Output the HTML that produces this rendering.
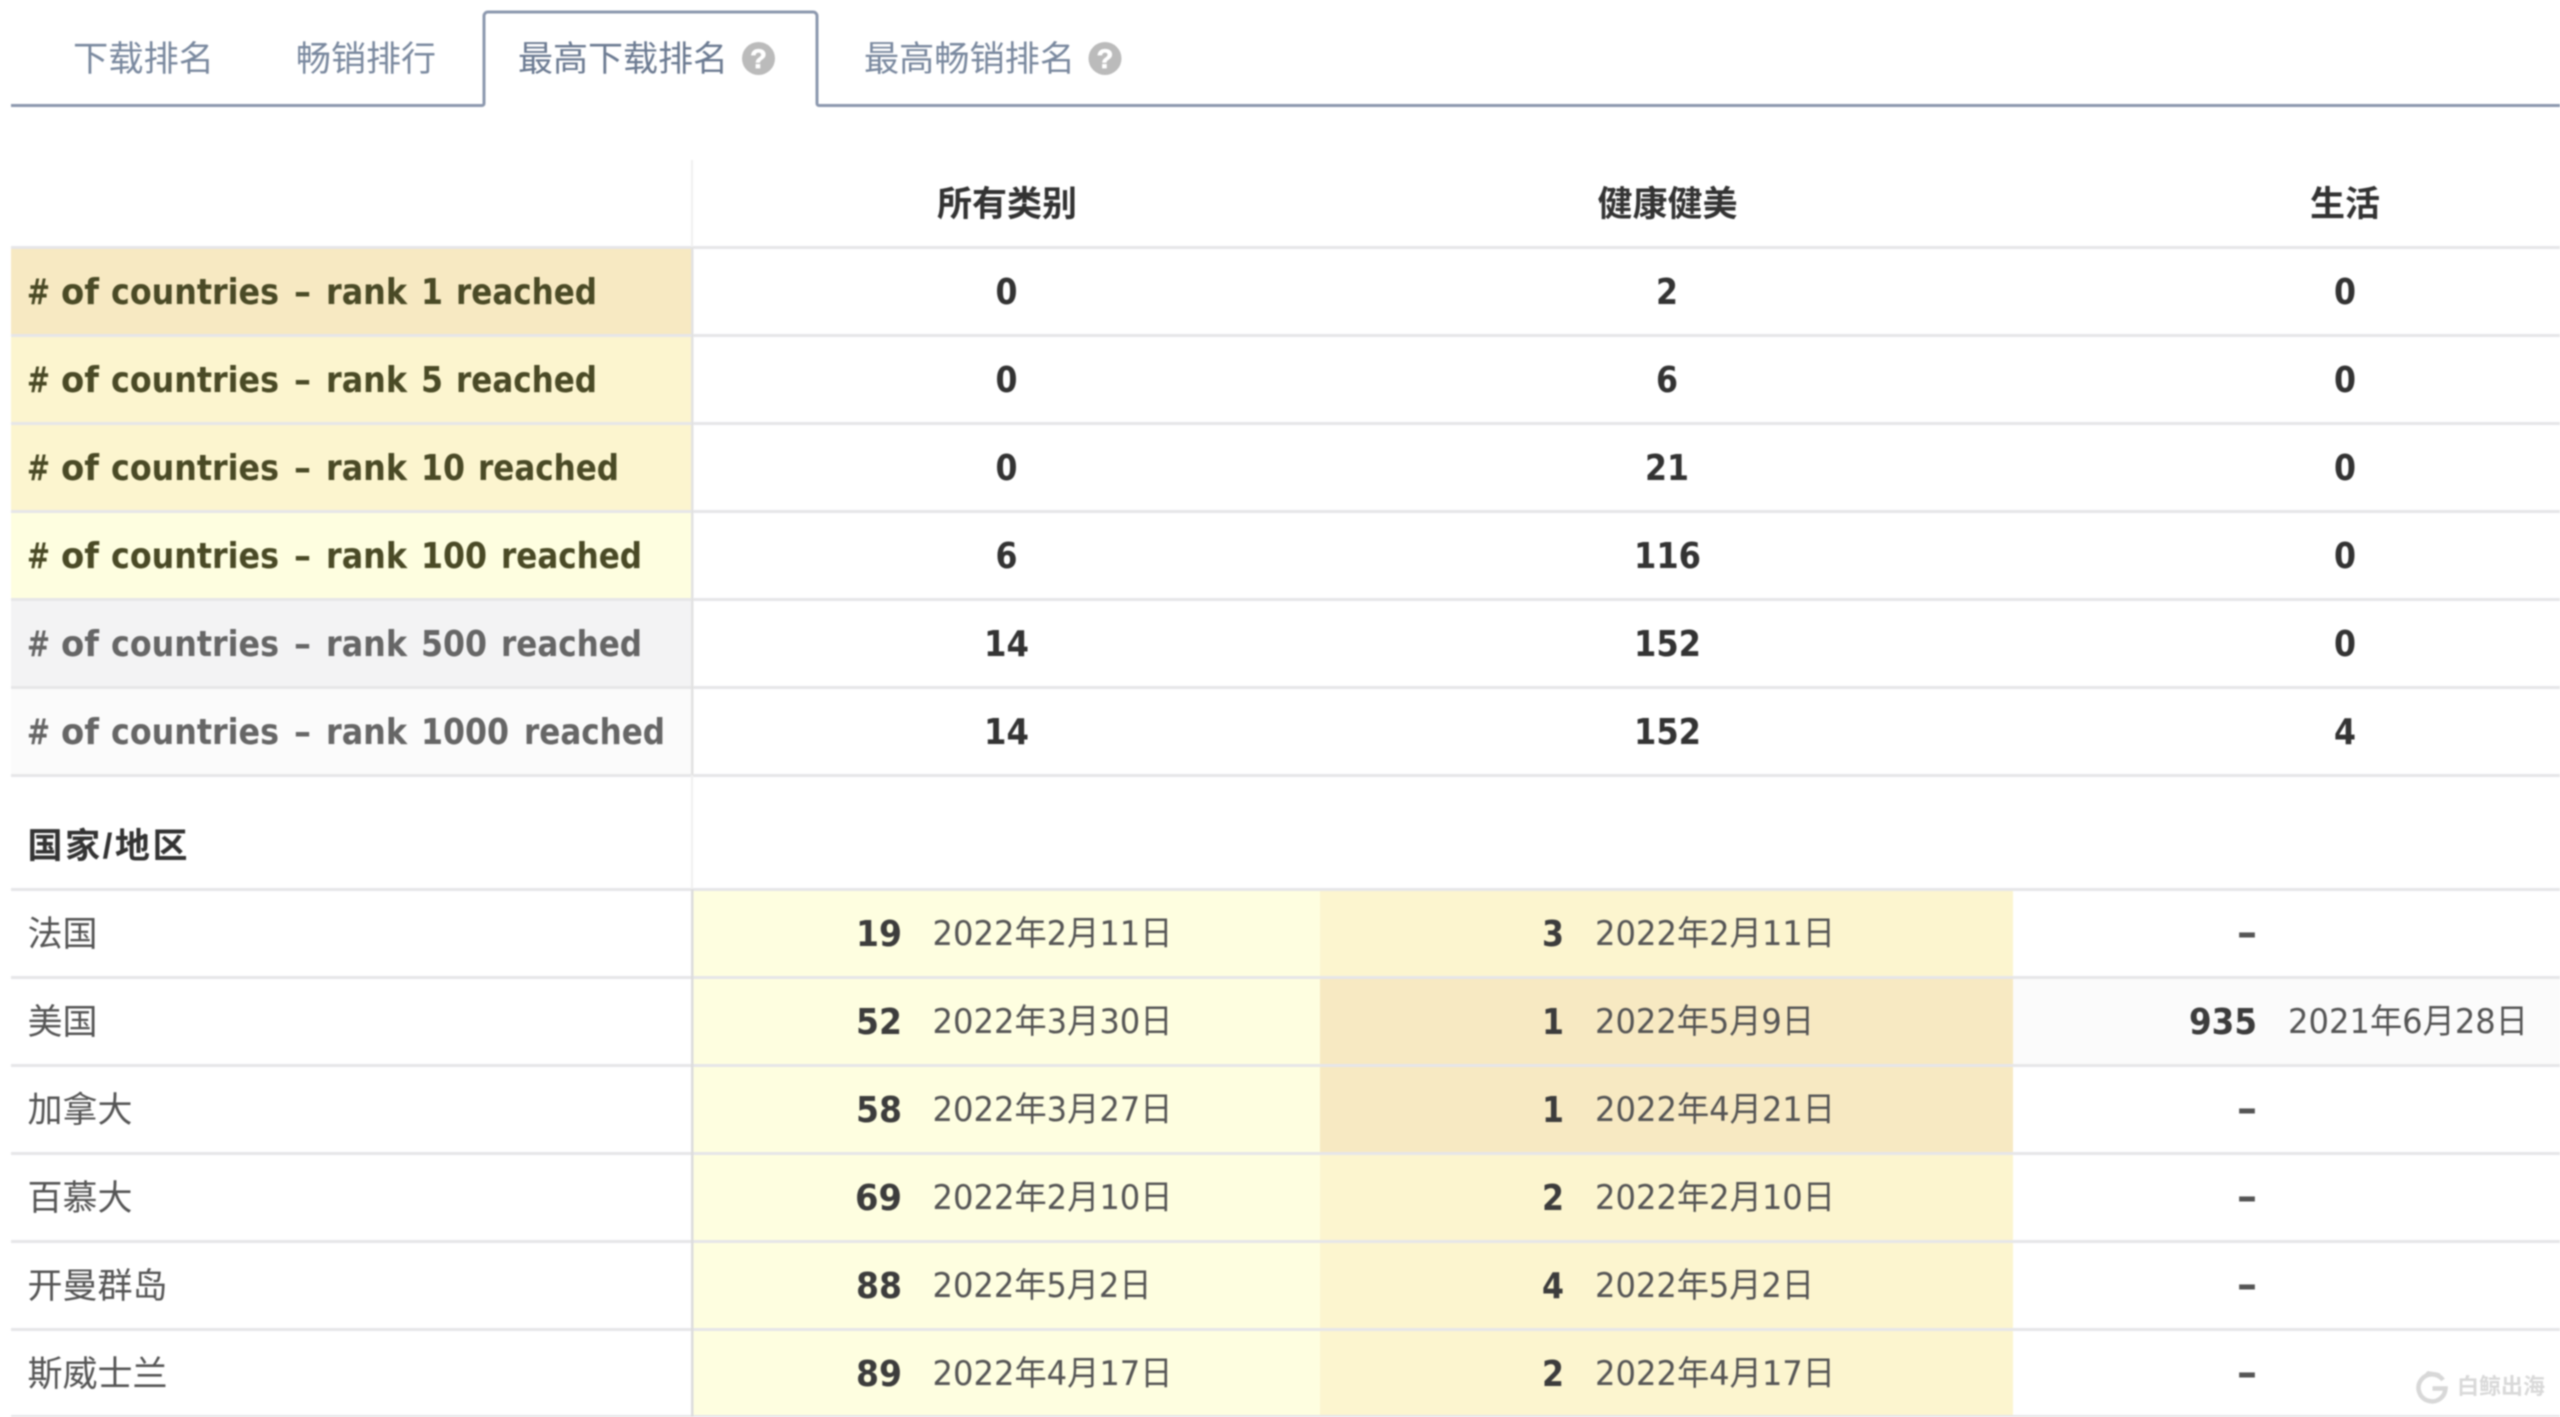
<!DOCTYPE html>
<html lang="zh">
<head>
<meta charset="utf-8">
<title>最高下载排名</title>
<style>
html,body{margin:0;padding:0;background:#fff;width:2560px;height:1417px;overflow:hidden}
svg{display:block;filter:blur(0.7px)}
text{font-family:"DejaVu Sans","Noto Sans CJK SC",sans-serif;font-size:32px}
.tab{font-family:"Liberation Sans","Noto Sans CJK SC",sans-serif;font-size:35px;fill:#7a899f}
.tabA{font-family:"Liberation Sans","Noto Sans CJK SC",sans-serif;font-size:35px;fill:#6c7b92}
.hd{font-family:"Liberation Sans","Noto Sans CJK SC",sans-serif;font-size:35px;font-weight:700;fill:#333;text-anchor:middle}
.lb text{font-weight:700;fill:#4a4a26;font-size:36px}
.lg text{font-weight:700;fill:#666;font-size:36px}
.v{font-weight:700;fill:#333;text-anchor:middle;font-size:36px}
.n{font-weight:700;fill:#3c3c3c;text-anchor:end;font-size:36px}
.d{fill:#555;font-size:34px}
.c{font-family:"Liberation Sans","Noto Sans CJK SC",sans-serif;font-size:35px;fill:#555}
.dash{font-weight:700;fill:#555;text-anchor:middle;font-size:40px}
.q{font-family:"Liberation Sans",sans-serif;font-weight:700;font-size:27px;fill:#fff;stroke:#fff;stroke-width:.8px;text-anchor:middle}
</style>
</head>
<body>
<svg width="2560" height="1417" viewBox="0 0 2560 1417" xmlns="http://www.w3.org/2000/svg">
<rect width="2560" height="1417" fill="#fff"/>

<!-- row backgrounds -->
<rect x="11" y="247" width="681" height="88" fill="#f7e9c2"/>
<rect x="11" y="335" width="681" height="176" fill="#fcf5cf"/>
<rect x="11" y="511" width="681" height="88" fill="#fefee0"/>
<rect x="11" y="599" width="681" height="88" fill="#f3f3f4"/>
<rect x="11" y="687" width="681" height="88" fill="#fbfbfb"/>

<rect x="692" y="889" width="628" height="528" fill="#fefee0"/>
<rect x="1320" y="889" width="693" height="528" fill="#fcf5cf"/>
<rect x="1320" y="977" width="693" height="176" fill="#f7e9c2"/>
<rect x="2013" y="977" width="547" height="88" fill="#fbfbfb"/>

<!-- horizontal rules -->
<g fill="#e6e6e8">
<rect x="11" y="246" width="2549" height="3"/>
<rect x="11" y="334" width="2549" height="3"/>
<rect x="11" y="422" width="2549" height="3"/>
<rect x="11" y="510" width="2549" height="3"/>
<rect x="11" y="598" width="2549" height="3"/>
<rect x="11" y="686" width="2549" height="3"/>
<rect x="11" y="774" width="2549" height="3"/>
<rect x="11" y="888" width="2549" height="3"/>
<rect x="11" y="976" width="2549" height="3"/>
<rect x="11" y="1064" width="2549" height="3"/>
<rect x="11" y="1152" width="2549" height="3"/>
<rect x="11" y="1240" width="2549" height="3"/>
<rect x="11" y="1328" width="2549" height="3"/>
<rect x="11" y="1415" width="2549" height="2"/>
</g>

<!-- vertical rule -->
<rect x="691" y="160" width="2" height="87" fill="#f0f0f0"/>
<rect x="691" y="247" width="2.5" height="528" fill="#e2e2e2"/>
<rect x="691" y="775" width="2" height="114" fill="#f0f0f0"/>
<rect x="691" y="889" width="2.5" height="528" fill="#dcdcdc"/>

<!-- tabs -->
<path d="M11 105.500H482a2 2 0 0 0 2-2V16a4 4 0 0 1 4-4H813a4 4 0 0 1 4 4V103.500a2 2 0 0 0 2 2H2560" fill="none" stroke="#8c98ae" stroke-width="3"/>
<text class="tab" x="73" y="71" textLength="141" lengthAdjust="spacingAndGlyphs">下载排名</text>
<text class="tab" x="296" y="71" textLength="140" lengthAdjust="spacingAndGlyphs">畅销排行</text>
<text class="tabA" x="518" y="71" textLength="210" lengthAdjust="spacingAndGlyphs">最高下载排名</text>
<circle cx="758.500" cy="58.500" r="16.500" fill="#bbb"/>
<text class="q" x="758.500" y="68">?</text>
<text class="tab" x="864" y="71" textLength="211" lengthAdjust="spacingAndGlyphs">最高畅销排名</text>
<circle cx="1105" cy="58.500" r="16.500" fill="#bbb"/>
<text class="q" x="1105" y="68">?</text>

<!-- header -->
<text class="hd" x="1007" y="216">所有类别</text>
<text class="hd" x="1667.500" y="216">健康健美</text>
<text class="hd" x="2345" y="216">生活</text>

<!-- summary labels -->
<g class="lb">
<text x="27" y="304" textLength="23" lengthAdjust="spacingAndGlyphs">#</text><text x="61" y="304" textLength="38" lengthAdjust="spacingAndGlyphs">of</text><text x="111" y="304" textLength="168" lengthAdjust="spacingAndGlyphs">countries</text><text x="294" y="304" textLength="17" lengthAdjust="spacingAndGlyphs">–</text><text x="326" y="304" textLength="81" lengthAdjust="spacingAndGlyphs">rank</text><text x="421" y="304" textLength="22" lengthAdjust="spacingAndGlyphs">1</text><text x="456" y="304" textLength="141" lengthAdjust="spacingAndGlyphs">reached</text>
<text x="27" y="392" textLength="23" lengthAdjust="spacingAndGlyphs">#</text><text x="61" y="392" textLength="38" lengthAdjust="spacingAndGlyphs">of</text><text x="111" y="392" textLength="168" lengthAdjust="spacingAndGlyphs">countries</text><text x="294" y="392" textLength="17" lengthAdjust="spacingAndGlyphs">–</text><text x="326" y="392" textLength="81" lengthAdjust="spacingAndGlyphs">rank</text><text x="421" y="392" textLength="22" lengthAdjust="spacingAndGlyphs">5</text><text x="456" y="392" textLength="141" lengthAdjust="spacingAndGlyphs">reached</text>
<text x="27" y="480" textLength="23" lengthAdjust="spacingAndGlyphs">#</text><text x="61" y="480" textLength="38" lengthAdjust="spacingAndGlyphs">of</text><text x="111" y="480" textLength="168" lengthAdjust="spacingAndGlyphs">countries</text><text x="294" y="480" textLength="17" lengthAdjust="spacingAndGlyphs">–</text><text x="326" y="480" textLength="81" lengthAdjust="spacingAndGlyphs">rank</text><text x="421" y="480" textLength="44" lengthAdjust="spacingAndGlyphs">10</text><text x="478" y="480" textLength="141" lengthAdjust="spacingAndGlyphs">reached</text>
<text x="27" y="568" textLength="23" lengthAdjust="spacingAndGlyphs">#</text><text x="61" y="568" textLength="38" lengthAdjust="spacingAndGlyphs">of</text><text x="111" y="568" textLength="168" lengthAdjust="spacingAndGlyphs">countries</text><text x="294" y="568" textLength="17" lengthAdjust="spacingAndGlyphs">–</text><text x="326" y="568" textLength="81" lengthAdjust="spacingAndGlyphs">rank</text><text x="421" y="568" textLength="66" lengthAdjust="spacingAndGlyphs">100</text><text x="501" y="568" textLength="141" lengthAdjust="spacingAndGlyphs">reached</text>
</g>
<g class="lg">
<text x="27" y="656" textLength="23" lengthAdjust="spacingAndGlyphs">#</text><text x="61" y="656" textLength="38" lengthAdjust="spacingAndGlyphs">of</text><text x="111" y="656" textLength="168" lengthAdjust="spacingAndGlyphs">countries</text><text x="294" y="656" textLength="17" lengthAdjust="spacingAndGlyphs">–</text><text x="326" y="656" textLength="81" lengthAdjust="spacingAndGlyphs">rank</text><text x="421" y="656" textLength="66" lengthAdjust="spacingAndGlyphs">500</text><text x="501" y="656" textLength="141" lengthAdjust="spacingAndGlyphs">reached</text>
<text x="27" y="744" textLength="23" lengthAdjust="spacingAndGlyphs">#</text><text x="61" y="744" textLength="38" lengthAdjust="spacingAndGlyphs">of</text><text x="111" y="744" textLength="168" lengthAdjust="spacingAndGlyphs">countries</text><text x="294" y="744" textLength="17" lengthAdjust="spacingAndGlyphs">–</text><text x="326" y="744" textLength="81" lengthAdjust="spacingAndGlyphs">rank</text><text x="421" y="744" textLength="88" lengthAdjust="spacingAndGlyphs">1000</text><text x="524" y="744" textLength="141" lengthAdjust="spacingAndGlyphs">reached</text>
</g>

<!-- summary values -->
<text class="v" x="1006.500" y="304" textLength="22" lengthAdjust="spacingAndGlyphs">0</text><text class="v" x="1667" y="304" textLength="22" lengthAdjust="spacingAndGlyphs">2</text><text class="v" x="2345" y="304" textLength="22" lengthAdjust="spacingAndGlyphs">0</text>
<text class="v" x="1006.500" y="392" textLength="22" lengthAdjust="spacingAndGlyphs">0</text><text class="v" x="1667" y="392" textLength="22" lengthAdjust="spacingAndGlyphs">6</text><text class="v" x="2345" y="392" textLength="22" lengthAdjust="spacingAndGlyphs">0</text>
<text class="v" x="1006.500" y="480" textLength="22" lengthAdjust="spacingAndGlyphs">0</text><text class="v" x="1667" y="480" textLength="44" lengthAdjust="spacingAndGlyphs">21</text><text class="v" x="2345" y="480" textLength="22" lengthAdjust="spacingAndGlyphs">0</text>
<text class="v" x="1006.500" y="568" textLength="22" lengthAdjust="spacingAndGlyphs">6</text><text class="v" x="1667.500" y="568" textLength="67" lengthAdjust="spacingAndGlyphs">116</text><text class="v" x="2345" y="568" textLength="22" lengthAdjust="spacingAndGlyphs">0</text>
<text class="v" x="1006.500" y="656" textLength="45" lengthAdjust="spacingAndGlyphs">14</text><text class="v" x="1667.500" y="656" textLength="67" lengthAdjust="spacingAndGlyphs">152</text><text class="v" x="2345" y="656" textLength="22" lengthAdjust="spacingAndGlyphs">0</text>
<text class="v" x="1006.500" y="744" textLength="45" lengthAdjust="spacingAndGlyphs">14</text><text class="v" x="1667.500" y="744" textLength="67" lengthAdjust="spacingAndGlyphs">152</text><text class="v" x="2345" y="744" textLength="22" lengthAdjust="spacingAndGlyphs">4</text>

<!-- country heading -->
<text x="27.500" y="858" style="font-family:'Liberation Sans','Noto Sans CJK SC',sans-serif;font-size:35px;font-weight:700;fill:#333" textLength="160" lengthAdjust="spacing">国家/地区</text>

<!-- country names -->
<text class="c" x="27.500" y="946">法国</text>
<text class="c" x="27.500" y="1034">美国</text>
<text class="c" x="27.500" y="1122">加拿大</text>
<text class="c" x="27.500" y="1210">百慕大</text>
<text class="c" x="27.500" y="1298">开曼群岛</text>
<text class="c" x="27.500" y="1386">斯威士兰</text>

<!-- column 1 -->
<text class="n" x="902" y="946" textLength="46" lengthAdjust="spacingAndGlyphs">19</text><text class="d" x="932.500" y="945" textLength="240" lengthAdjust="spacingAndGlyphs">2022年2月11日</text>
<text class="n" x="902" y="1034" textLength="46" lengthAdjust="spacingAndGlyphs">52</text><text class="d" x="932.500" y="1033" textLength="240" lengthAdjust="spacingAndGlyphs">2022年3月30日</text>
<text class="n" x="902" y="1122" textLength="46" lengthAdjust="spacingAndGlyphs">58</text><text class="d" x="932.500" y="1121" textLength="240" lengthAdjust="spacingAndGlyphs">2022年3月27日</text>
<text class="n" x="902" y="1210" textLength="47" lengthAdjust="spacingAndGlyphs">69</text><text class="d" x="932.500" y="1209" textLength="240" lengthAdjust="spacingAndGlyphs">2022年2月10日</text>
<text class="n" x="902" y="1298" textLength="46" lengthAdjust="spacingAndGlyphs">88</text><text class="d" x="932.500" y="1297" textLength="219" lengthAdjust="spacingAndGlyphs">2022年5月2日</text>
<text class="n" x="902" y="1386" textLength="46" lengthAdjust="spacingAndGlyphs">89</text><text class="d" x="932.500" y="1385" textLength="240" lengthAdjust="spacingAndGlyphs">2022年4月17日</text>

<!-- column 2 -->
<text class="n" x="1564" y="946" textLength="22" lengthAdjust="spacingAndGlyphs">3</text><text class="d" x="1595" y="945" textLength="240" lengthAdjust="spacingAndGlyphs">2022年2月11日</text>
<text class="n" x="1564" y="1034" textLength="22" lengthAdjust="spacingAndGlyphs">1</text><text class="d" x="1595" y="1033" textLength="219" lengthAdjust="spacingAndGlyphs">2022年5月9日</text>
<text class="n" x="1564" y="1122" textLength="22" lengthAdjust="spacingAndGlyphs">1</text><text class="d" x="1595" y="1121" textLength="240" lengthAdjust="spacingAndGlyphs">2022年4月21日</text>
<text class="n" x="1564" y="1210" textLength="22" lengthAdjust="spacingAndGlyphs">2</text><text class="d" x="1595" y="1209" textLength="240" lengthAdjust="spacingAndGlyphs">2022年2月10日</text>
<text class="n" x="1564" y="1298" textLength="22" lengthAdjust="spacingAndGlyphs">4</text><text class="d" x="1595" y="1297" textLength="219" lengthAdjust="spacingAndGlyphs">2022年5月2日</text>
<text class="n" x="1564" y="1386" textLength="22" lengthAdjust="spacingAndGlyphs">2</text><text class="d" x="1595" y="1385" textLength="240" lengthAdjust="spacingAndGlyphs">2022年4月17日</text>

<!-- column 3 -->
<text class="dash" x="2247" y="946">–</text>
<text class="n" x="2257" y="1034" textLength="68" lengthAdjust="spacingAndGlyphs">935</text><text class="d" x="2288" y="1033" textLength="240" lengthAdjust="spacingAndGlyphs">2021年6月28日</text>
<text class="dash" x="2247" y="1122">–</text>
<text class="dash" x="2247" y="1210">–</text>
<text class="dash" x="2247" y="1298">–</text>
<text class="dash" x="2247" y="1386">–</text>

<!-- watermark -->
<path d="M2443 1380a13.500 13.500 0 1 0 2.500 8.500h-13" fill="none" stroke="#d8d8d8" stroke-width="4.500"/>
<path d="M2423 1379c1-4 3-7 5-8 4 1 10 1 13 3-6 0-13 1-18 5z" fill="#d8d8d8"/>
<text x="2457" y="1394" style="font-family:'Liberation Sans','Noto Sans CJK SC',sans-serif;font-size:22px;font-weight:700;fill:#d9d9d9">白鲸出海</text>
</svg>
</body>
</html>
